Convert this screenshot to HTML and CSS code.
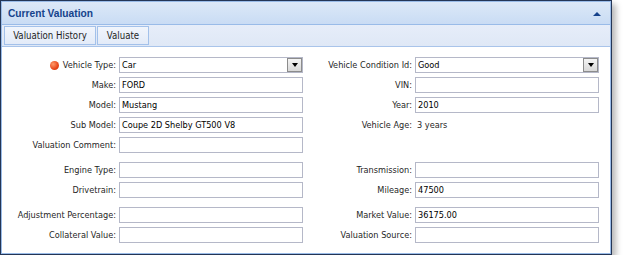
FILE: index.html
```html
<!DOCTYPE html>
<html>
<head>
<meta charset="utf-8">
<link rel="stylesheet" href="styles.css">
</head>
<body>
<div class="panel">
  <div class="panel-inner">
    <div class="header">
      <span class="title">Current Valuation</span>
      <span class="collapse"></span>
    </div>
    <div class="toolbar">
      <button class="tbtn tbtn-history">Valuation History</button>
      <button class="tbtn tbtn-valuate">Valuate</button>
    </div>
    <div class="form">
      <div class="group">
        <label class="lbl"><span class="req"></span>Vehicle Type:</label>
        <div class="field select"><span class="val">Car</span><span class="trigger"></span></div>
        <label class="lbl">Vehicle Condition Id:</label>
        <div class="field select"><span class="val">Good</span><span class="trigger"></span></div>

        <label class="lbl">Make:</label>
        <div class="field"><span class="val">FORD</span></div>
        <label class="lbl">VIN:</label>
        <div class="field"></div>

        <label class="lbl">Model:</label>
        <div class="field"><span class="val">Mustang</span></div>
        <label class="lbl">Year:</label>
        <div class="field"><span class="val">2010</span></div>

        <label class="lbl">Sub Model:</label>
        <div class="field"><span class="val">Coupe 2D Shelby GT500 V8</span></div>
        <label class="lbl">Vehicle Age:</label>
        <div class="plain">3 years</div>

        <label class="lbl">Valuation Comment:</label>
        <div class="field"></div>
        <div></div>
        <div></div>
      </div>
      <div class="group">
        <label class="lbl">Engine Type:</label>
        <div class="field"></div>
        <label class="lbl">Transmission:</label>
        <div class="field"></div>

        <label class="lbl">Drivetrain:</label>
        <div class="field"></div>
        <label class="lbl">Mileage:</label>
        <div class="field"><span class="val">47500</span></div>
      </div>
      <div class="group">
        <label class="lbl">Adjustment Percentage:</label>
        <div class="field"></div>
        <label class="lbl">Market Value:</label>
        <div class="field"><span class="val">36175.00</span></div>

        <label class="lbl">Collateral Value:</label>
        <div class="field"></div>
        <label class="lbl">Valuation Source:</label>
        <div class="field"></div>
      </div>
    </div>
  </div>
</div>
</body>
</html>
```

FILE: styles.css
```css
html, body {
  margin: 0;
  padding: 0;
  background: #ffffff;
}
body {
  font-family: "DejaVu Sans Condensed", "DejaVu Sans", sans-serif;
  font-stretch: condensed;
  font-size: 9.1px;
  color: #1f1f1f;
}
.panel {
  width: 610px;
  border: 1px solid #243656;
  background: #ffffff;
  box-shadow: 4px 4px 6px rgba(0, 0, 0, 0.28);
}
.panel-inner {
  border: 1px solid #99bbe8;
}
.header {
  height: 22px;
  display: flex;
  align-items: center;
  justify-content: space-between;
  padding: 0 9px 0 6px;
  background: linear-gradient(#dce8f7, #c9dcf4);
  border-bottom: 1px solid #99bbe8;
}
.title {
  font-family: "Liberation Sans", Arial, sans-serif;
  font-stretch: normal;
  font-weight: bold;
  color: #15428b;
  font-size: 10.2px;
}
.collapse {
  width: 0;
  height: 0;
  border-left: 4px solid transparent;
  border-right: 4px solid transparent;
  border-bottom: 4px solid #15428b;
  margin-top: 1px;
}
.toolbar {
  height: 21px;
  display: flex;
  align-items: center;
  padding: 0 0 0 2px;
  background: linear-gradient(#e6edf9, #dfe8f6);
  border-bottom: 1px solid #a9c4ea;
}
.tbtn {
  height: 19px;
  margin: 0;
  padding: 0;
  font-family: inherit;
  font-stretch: inherit;
  font-size: 9.6px;
  color: #1f1f1f;
  border: 1px solid #a3c1ea;
  background: linear-gradient(#f1f5fc, #e3ebf8);
  margin-right: 1px;
}
.tbtn-history {
  width: 92px;
}
.tbtn-valuate {
  width: 52px;
}
.form {
  padding: 10px 0 10px 2px;
}
.group {
  display: grid;
  grid-template-columns: 112px 184px 106px 184px;
  grid-auto-rows: 16px;
  column-gap: 3px;
  row-gap: 4px;
}
.group + .group {
  margin-top: 9px;
}
.lbl {
  display: flex;
  align-items: center;
  justify-content: flex-end;
  white-space: nowrap;
}
.req {
  width: 9px;
  height: 9px;
  border-radius: 50%;
  background: radial-gradient(circle at 35% 35%, #ff9a6a, #e8461a 60%, #c0340c);
  margin-right: 4px;
}
.field {
  box-sizing: border-box;
  height: 16px;
  border: 1px solid #b5b8c8;
  background: #ffffff;
  display: flex;
  align-items: center;
  padding-left: 2px;
  color: #000000;
}
.select {
  padding-right: 0;
}
.val {
  flex: 1;
  white-space: nowrap;
}
.trigger {
  box-sizing: border-box;
  width: 15px;
  height: 14px;
  border: 1px solid #8c8c8c;
  background: linear-gradient(#f4f4f4, #d8d8d8);
  display: flex;
  align-items: center;
  justify-content: center;
}
.trigger::after {
  content: "";
  width: 0;
  height: 0;
  border-left: 3.5px solid transparent;
  border-right: 3.5px solid transparent;
  border-top: 4px solid #000000;
}
.plain {
  display: flex;
  align-items: center;
  padding-left: 2px;
  color: #1f1f1f;
}
```
